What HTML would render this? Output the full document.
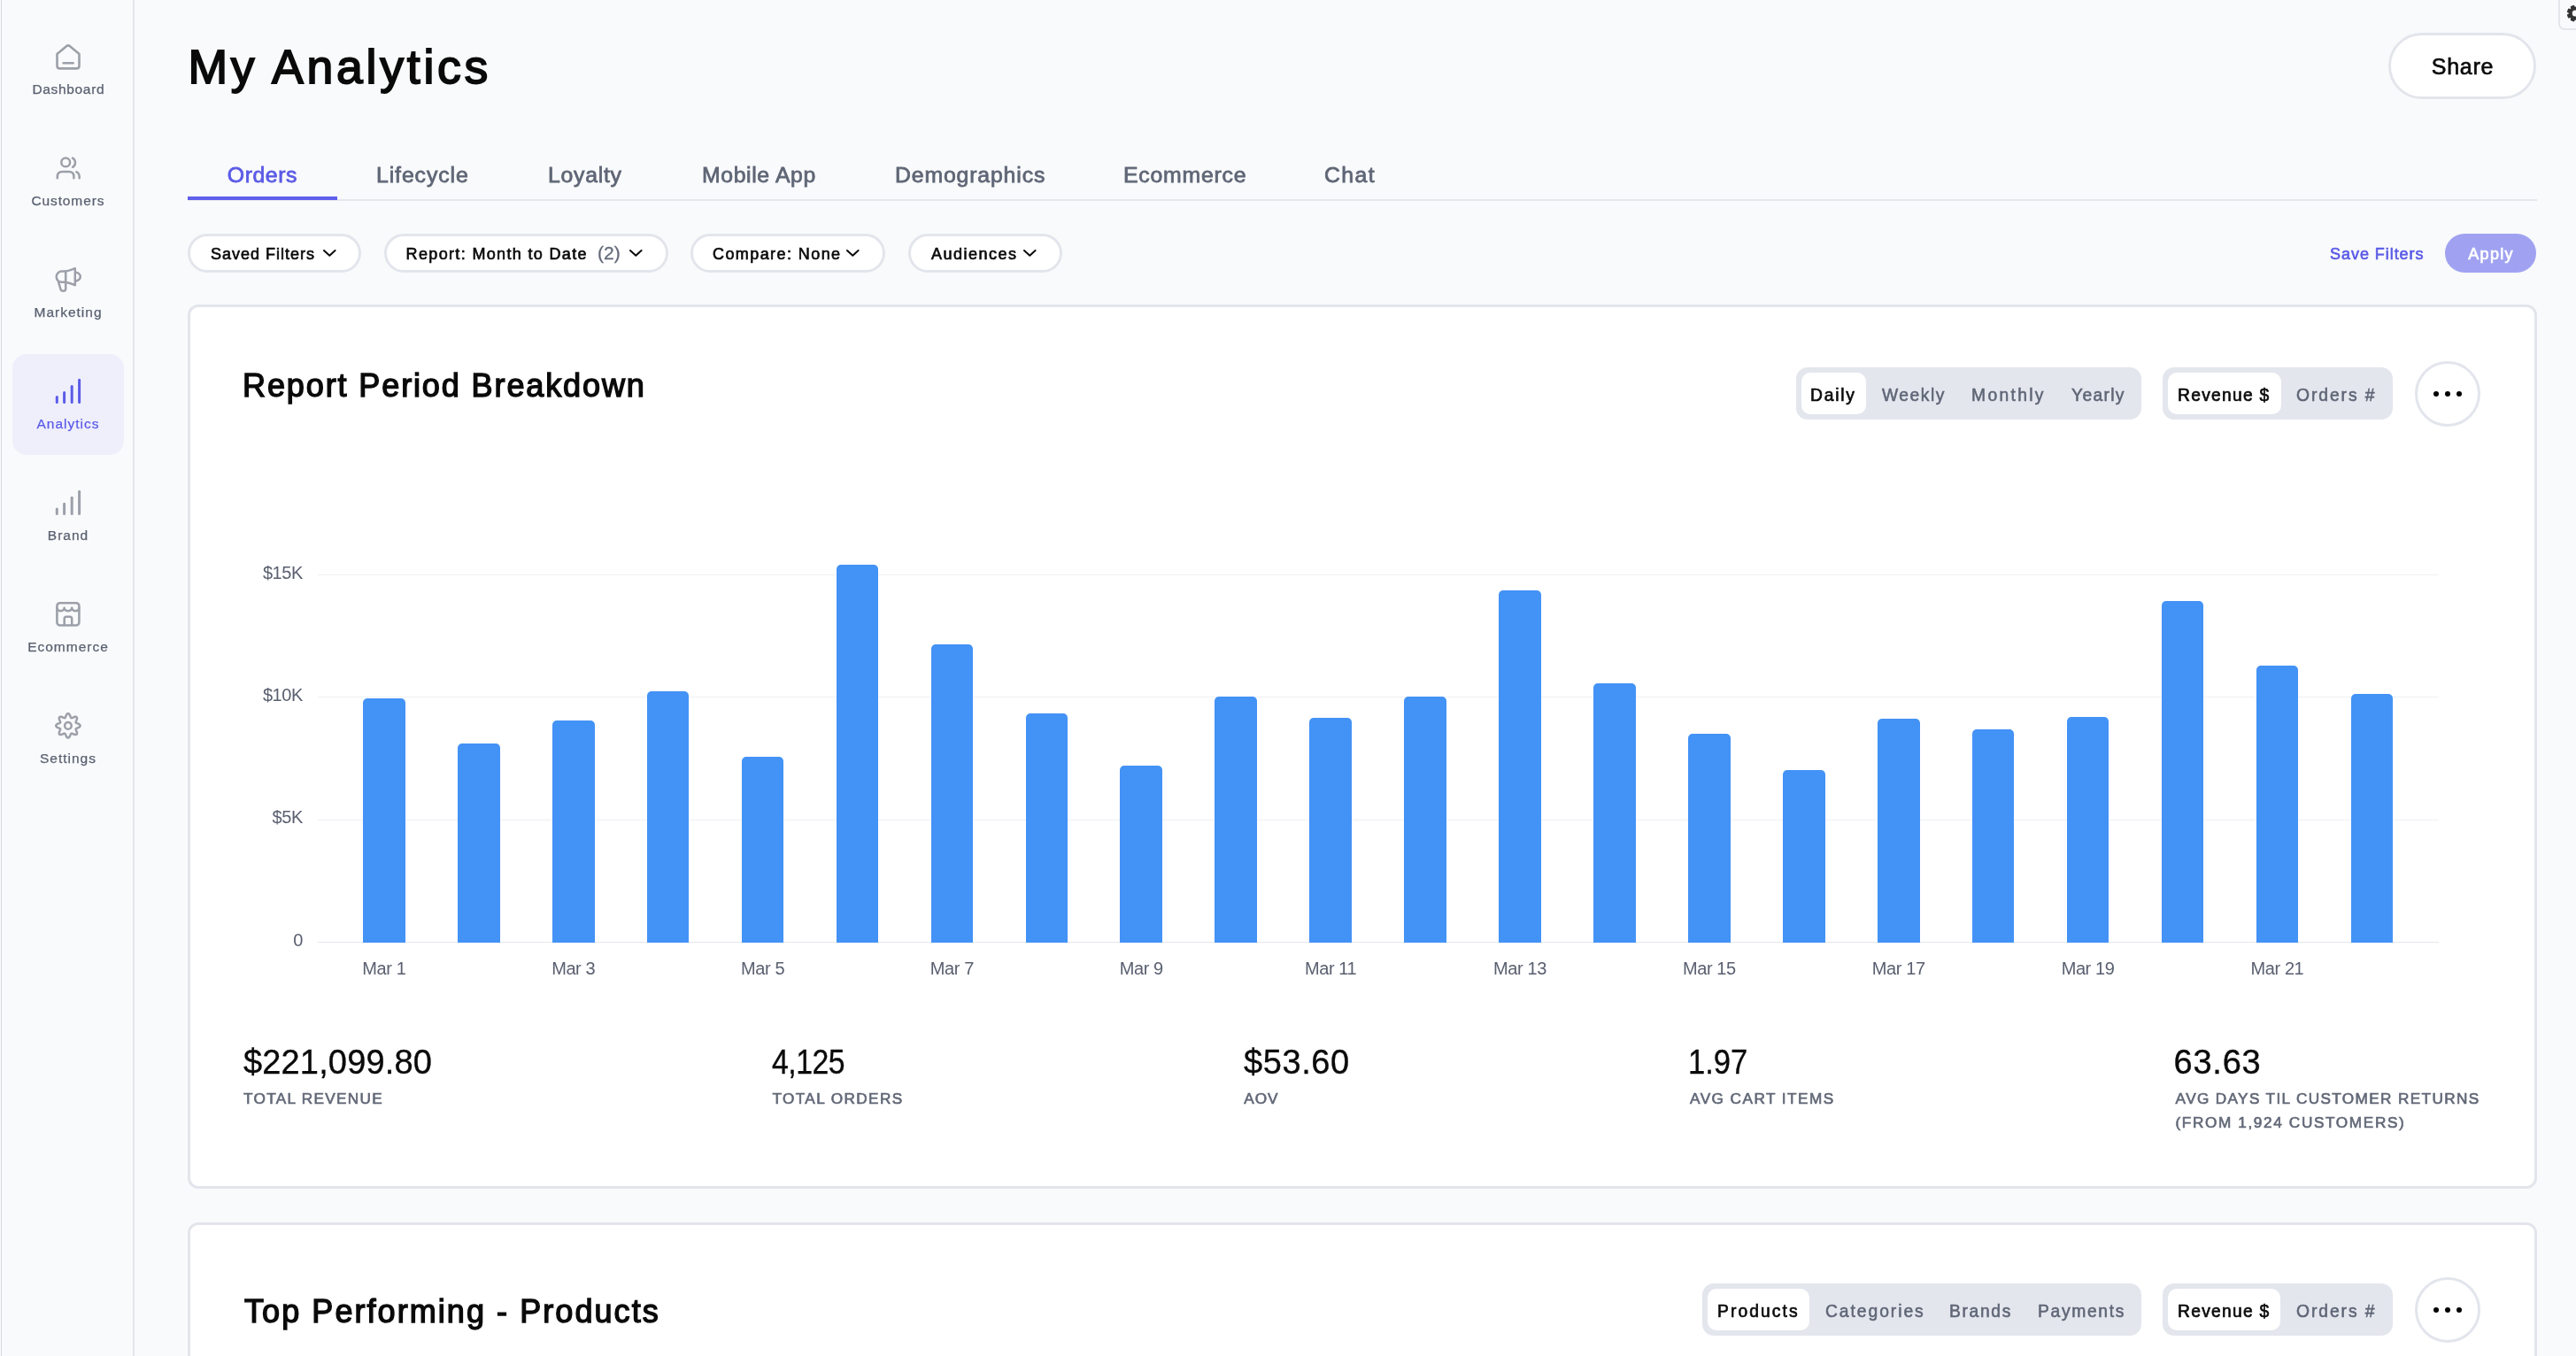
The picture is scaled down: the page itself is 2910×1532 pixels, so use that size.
<!DOCTYPE html><html><head><meta charset="utf-8"><style>
html,body{margin:0;padding:0;}
body{width:2910px;height:1532px;overflow:hidden;position:relative;background:#F9FAFB;font-family:"Liberation Sans", sans-serif;}
#root{position:absolute;left:0;top:0;width:2910px;height:1532px;will-change:transform;}
</style></head><body><div id="root">
<div style="position:absolute;left:1px;top:0px;width:1px;height:1532px;background:#D5D8DE;border-radius:0px;"></div>
<div style="position:absolute;left:150px;top:0px;width:2px;height:1532px;background:#E3E5EE;border-radius:0px;"></div>
<div style="position:absolute;left:14px;top:400px;width:126px;height:114px;background:#EFEFFC;border-radius:16px;"></div>
<div style="position:absolute;left:-422.65px;width:1000px;text-align:center;top:93.38px;height:15.5px;line-height:15.5px;font-size:15.5px;font-weight:400;color:#596070;letter-spacing:0.658px;white-space:nowrap;-webkit-text-stroke:0.25px #596070;">Dashboard</div>
<div style="position:absolute;left:-423.10px;width:1000px;text-align:center;top:219.28px;height:15.5px;line-height:15.5px;font-size:15.5px;font-weight:400;color:#596070;letter-spacing:0.875px;white-space:nowrap;-webkit-text-stroke:0.25px #596070;">Customers</div>
<div style="position:absolute;left:-423.00px;width:1000px;text-align:center;top:345.18px;height:15.5px;line-height:15.5px;font-size:15.5px;font-weight:400;color:#596070;letter-spacing:1.000px;white-space:nowrap;-webkit-text-stroke:0.25px #596070;">Marketing</div>
<div style="position:absolute;left:-423.00px;width:1000px;text-align:center;top:471.08px;height:15.5px;line-height:15.5px;font-size:15.5px;font-weight:400;color:#5B5BE8;letter-spacing:1.000px;white-space:nowrap;-webkit-text-stroke:0.25px #5B5BE8;">Analytics</div>
<div style="position:absolute;left:-423.00px;width:1000px;text-align:center;top:596.98px;height:15.5px;line-height:15.5px;font-size:15.5px;font-weight:400;color:#596070;letter-spacing:1.000px;white-space:nowrap;-webkit-text-stroke:0.25px #596070;">Brand</div>
<div style="position:absolute;left:-423.00px;width:1000px;text-align:center;top:722.88px;height:15.5px;line-height:15.5px;font-size:15.5px;font-weight:400;color:#596070;letter-spacing:1.000px;white-space:nowrap;-webkit-text-stroke:0.25px #596070;">Ecommerce</div>
<div style="position:absolute;left:-423.00px;width:1000px;text-align:center;top:848.78px;height:15.5px;line-height:15.5px;font-size:15.5px;font-weight:400;color:#596070;letter-spacing:1.000px;white-space:nowrap;-webkit-text-stroke:0.25px #596070;">Settings</div>
<svg style="position:absolute;left:0;top:0" width="152" height="900" viewBox="0 0 152 900"><path d="M64.5,61 L75.3,52.1 Q77,50.7 78.7,52.1 L89.5,61 L89.5,74.2 Q89.5,77.4 86.3,77.4 L67.7,77.4 Q64.5,77.4 64.5,74.2 Z" fill="none" stroke="#9CA0A9" stroke-width="2.6" stroke-linejoin="round"/><path d="M71.7,71.3 H82.6" stroke="#9CA0A9" stroke-width="2.6" stroke-linecap="round"/><circle cx="74.2" cy="183.4" r="4.9" fill="none" stroke="#9CA0A9" stroke-width="2.5"/><path d="M82,178.6 Q85,180 85,183.7 Q85,187.4 82,188.8" fill="none" stroke="#9CA0A9" stroke-width="2.5" stroke-linecap="round"/><path d="M64.8,201.2 V199.5 Q64.8,194 70.3,194 H78 Q83.4,194 83.4,199.5 V201.2" fill="none" stroke="#9CA0A9" stroke-width="2.5" stroke-linecap="round"/><path d="M86.3,194.2 Q89.7,195.8 89.7,200 V201.2" fill="none" stroke="#9CA0A9" stroke-width="2.5" stroke-linecap="round"/><path d="M74.2,306.6 Q80,305.4 84.8,303.2 L84.8,322.2 Q80,320 74.2,318.8 L69.8,318.8 A6.1,6.1 0 0 1 69.8,306.6 Z" fill="none" stroke="#9CA0A9" stroke-width="2.5" stroke-linejoin="round"/><path d="M74.2,306.6 V326.2 Q74.2,328.8 71.2,328.8 Q69,328.8 68.4,326.5 L66,318.3" fill="none" stroke="#9CA0A9" stroke-width="2.5" stroke-linejoin="round" stroke-linecap="round"/><path d="M85.2,307.4 Q90.8,308.8 90.8,312.6 Q90.8,316.4 85.2,317.8" fill="none" stroke="#9CA0A9" stroke-width="2.5" stroke-linecap="round"/><line x1="64.3" y1="448.6" x2="64.3" y2="454.5" stroke="#5B5BE8" stroke-width="3" stroke-linecap="round"/><line x1="72.6" y1="443.4" x2="72.6" y2="454.5" stroke="#5B5BE8" stroke-width="3" stroke-linecap="round"/><line x1="81.2" y1="436.4" x2="81.2" y2="454.5" stroke="#5B5BE8" stroke-width="3" stroke-linecap="round"/><line x1="89.6" y1="429.2" x2="89.6" y2="454.5" stroke="#5B5BE8" stroke-width="3" stroke-linecap="round"/><line x1="64.3" y1="574.9" x2="64.3" y2="580.4" stroke="#9CA0A9" stroke-width="3" stroke-linecap="round"/><line x1="72.6" y1="569.3" x2="72.6" y2="580.4" stroke="#9CA0A9" stroke-width="3" stroke-linecap="round"/><line x1="81.2" y1="562.3" x2="81.2" y2="580.4" stroke="#9CA0A9" stroke-width="3" stroke-linecap="round"/><line x1="89.6" y1="555.3" x2="89.6" y2="580.4" stroke="#9CA0A9" stroke-width="3" stroke-linecap="round"/><rect x="64.4" y="681.2" width="25" height="25.3" rx="3.5" fill="none" stroke="#9CA0A9" stroke-width="2.6"/><path d="M64.4,686.8 A4.1,3.4 0 0 0 72.6,686.8 A4.3,3.4 0 0 0 81.2,686.8 A4.1,3.4 0 0 0 89.4,686.8" fill="none" stroke="#9CA0A9" stroke-width="2.5" stroke-linejoin="round"/><path d="M72.7,706.5 V699 Q72.7,696.7 75,696.7 H78.9 Q81.2,696.7 81.2,699 V706.5" fill="none" stroke="#9CA0A9" stroke-width="2.5"/><path d="M90.60,819.90 L90.49,820.43 L90.16,820.94 L89.65,821.41 L89.00,821.82 L88.28,822.16 L87.55,822.46 L86.88,822.71 L86.32,822.96 L85.91,823.22 L85.68,823.54 L85.62,823.92 L85.72,824.39 L85.94,824.96 L86.24,825.62 L86.55,826.34 L86.81,827.10 L86.98,827.85 L87.01,828.54 L86.88,829.13 L86.59,829.59 L86.13,829.88 L85.54,830.01 L84.85,829.98 L84.10,829.81 L83.34,829.55 L82.62,829.24 L81.96,828.94 L81.39,828.72 L80.92,828.62 L80.54,828.68 L80.22,828.91 L79.96,829.32 L79.71,829.88 L79.46,830.55 L79.16,831.28 L78.82,832.00 L78.41,832.65 L77.94,833.16 L77.43,833.49 L76.90,833.60 L76.37,833.49 L75.86,833.16 L75.39,832.65 L74.98,832.00 L74.64,831.28 L74.34,830.55 L74.09,829.88 L73.84,829.32 L73.58,828.91 L73.26,828.68 L72.88,828.62 L72.41,828.72 L71.84,828.94 L71.18,829.24 L70.46,829.55 L69.70,829.81 L68.95,829.98 L68.26,830.01 L67.67,829.88 L67.21,829.59 L66.92,829.13 L66.79,828.54 L66.82,827.85 L66.99,827.10 L67.25,826.34 L67.56,825.62 L67.86,824.96 L68.08,824.39 L68.18,823.92 L68.12,823.54 L67.89,823.22 L67.48,822.96 L66.92,822.71 L66.25,822.46 L65.52,822.16 L64.80,821.82 L64.15,821.41 L63.64,820.94 L63.31,820.43 L63.20,819.90 L63.31,819.37 L63.64,818.86 L64.15,818.39 L64.80,817.98 L65.52,817.64 L66.25,817.34 L66.92,817.09 L67.48,816.84 L67.89,816.58 L68.12,816.26 L68.18,815.88 L68.08,815.41 L67.86,814.84 L67.56,814.18 L67.25,813.46 L66.99,812.70 L66.82,811.95 L66.79,811.26 L66.92,810.67 L67.21,810.21 L67.67,809.92 L68.26,809.79 L68.95,809.82 L69.70,809.99 L70.46,810.25 L71.18,810.56 L71.84,810.86 L72.41,811.08 L72.88,811.18 L73.26,811.12 L73.58,810.89 L73.84,810.48 L74.09,809.92 L74.34,809.25 L74.64,808.52 L74.98,807.80 L75.39,807.15 L75.86,806.64 L76.37,806.31 L76.90,806.20 L77.43,806.31 L77.94,806.64 L78.41,807.15 L78.82,807.80 L79.16,808.52 L79.46,809.25 L79.71,809.92 L79.96,810.48 L80.22,810.89 L80.54,811.12 L80.92,811.18 L81.39,811.08 L81.96,810.86 L82.62,810.56 L83.34,810.25 L84.10,809.99 L84.85,809.82 L85.54,809.79 L86.13,809.92 L86.59,810.21 L86.88,810.67 L87.01,811.26 L86.98,811.95 L86.81,812.70 L86.55,813.46 L86.24,814.18 L85.94,814.84 L85.72,815.41 L85.62,815.88 L85.68,816.26 L85.91,816.58 L86.32,816.84 L86.88,817.09 L87.55,817.34 L88.28,817.64 L89.00,817.98 L89.65,818.39 L90.16,818.86 L90.49,819.37 L90.60,819.90 Z" fill="none" stroke="#9CA0A9" stroke-width="2.5" stroke-linejoin="round"/><circle cx="76.9" cy="819.9" r="3.8" fill="none" stroke="#9CA0A9" stroke-width="2.5"/></svg>
<div style="position:absolute;left:212.50px;top:48.92px;height:53.6px;line-height:53.6px;font-size:53.6px;font-weight:400;color:#0A0A0A;letter-spacing:3.728px;white-space:nowrap;-webkit-text-stroke:1.8px #0A0A0A;">My Analytics</div>
<div style="position:absolute;left:2698px;top:37px;width:167px;height:75px;background:#fff;border:3px solid #E3E5EC;box-sizing:border-box;border-radius:38px;"></div>
<div style="position:absolute;left:2282.00px;width:1000px;text-align:center;top:62.83px;height:25px;line-height:25px;font-size:25px;font-weight:400;color:#0A0A0A;letter-spacing:0.750px;white-space:nowrap;-webkit-text-stroke:0.65px #0A0A0A;">Share</div>
<div style="position:absolute;left:2890px;top:-10px;width:40px;height:44px;background:#F9FAFB;border:2px solid #E4E6EB;box-sizing:border-box;border-radius:7px;"></div>
<svg style="position:absolute;left:2880px;top:0" width="30" height="34" viewBox="2880 0 30 34"><rect x="2906.7999999999997" y="5.699999999999999" width="4.8" height="6" rx="1.1" transform="rotate(22.5 2909.2 15.1)" fill="#333"/><rect x="2906.7999999999997" y="5.699999999999999" width="4.8" height="6" rx="1.1" transform="rotate(67.5 2909.2 15.1)" fill="#333"/><rect x="2906.7999999999997" y="5.699999999999999" width="4.8" height="6" rx="1.1" transform="rotate(112.5 2909.2 15.1)" fill="#333"/><rect x="2906.7999999999997" y="5.699999999999999" width="4.8" height="6" rx="1.1" transform="rotate(157.5 2909.2 15.1)" fill="#333"/><rect x="2906.7999999999997" y="5.699999999999999" width="4.8" height="6" rx="1.1" transform="rotate(202.5 2909.2 15.1)" fill="#333"/><rect x="2906.7999999999997" y="5.699999999999999" width="4.8" height="6" rx="1.1" transform="rotate(247.5 2909.2 15.1)" fill="#333"/><rect x="2906.7999999999997" y="5.699999999999999" width="4.8" height="6" rx="1.1" transform="rotate(292.5 2909.2 15.1)" fill="#333"/><rect x="2906.7999999999997" y="5.699999999999999" width="4.8" height="6" rx="1.1" transform="rotate(337.5 2909.2 15.1)" fill="#333"/><circle cx="2909.2" cy="15.1" r="7.4" fill="#333"/><circle cx="2909.2" cy="15.1" r="3.5" fill="#F9FAFB"/></svg>
<div style="position:absolute;left:256.80px;top:186.00px;height:24.8px;line-height:24.8px;font-size:24.8px;font-weight:400;color:#5B5BE6;letter-spacing:0.580px;white-space:nowrap;-webkit-text-stroke:0.8px #5B5BE6;">Orders</div>
<div style="position:absolute;left:425.00px;top:186.00px;height:24.8px;line-height:24.8px;font-size:24.8px;font-weight:400;color:#5F6676;letter-spacing:0.900px;white-space:nowrap;-webkit-text-stroke:0.8px #5F6676;">Lifecycle</div>
<div style="position:absolute;left:619.00px;top:186.00px;height:24.8px;line-height:24.8px;font-size:24.8px;font-weight:400;color:#5F6676;letter-spacing:0.733px;white-space:nowrap;-webkit-text-stroke:0.8px #5F6676;">Loyalty</div>
<div style="position:absolute;left:793.00px;top:186.00px;height:24.8px;line-height:24.8px;font-size:24.8px;font-weight:400;color:#5F6676;letter-spacing:0.622px;white-space:nowrap;-webkit-text-stroke:0.8px #5F6676;">Mobile App</div>
<div style="position:absolute;left:1011.00px;top:186.00px;height:24.8px;line-height:24.8px;font-size:24.8px;font-weight:400;color:#5F6676;letter-spacing:0.855px;white-space:nowrap;-webkit-text-stroke:0.8px #5F6676;">Demographics</div>
<div style="position:absolute;left:1269.00px;top:186.00px;height:24.8px;line-height:24.8px;font-size:24.8px;font-weight:400;color:#5F6676;letter-spacing:0.775px;white-space:nowrap;-webkit-text-stroke:0.8px #5F6676;">Ecommerce</div>
<div style="position:absolute;left:1496.00px;top:186.00px;height:24.8px;line-height:24.8px;font-size:24.8px;font-weight:400;color:#5F6676;letter-spacing:1.400px;white-space:nowrap;-webkit-text-stroke:0.8px #5F6676;">Chat</div>
<div style="position:absolute;left:212px;top:225px;width:2654px;height:2px;background:#E5E7EC;border-radius:0px;"></div>
<div style="position:absolute;left:212px;top:221.5px;width:169px;height:4.5px;background:#5E5FEA;border-radius:0px;"></div>
<div style="position:absolute;left:212px;top:264px;width:196px;height:44px;background:#fff;border:3px solid #E3E5EC;box-sizing:border-box;border-radius:22px;"></div>
<div style="position:absolute;left:434px;top:264px;width:321px;height:44px;background:#fff;border:3px solid #E3E5EC;box-sizing:border-box;border-radius:22px;"></div>
<div style="position:absolute;left:780px;top:264px;width:220px;height:44px;background:#fff;border:3px solid #E3E5EC;box-sizing:border-box;border-radius:22px;"></div>
<div style="position:absolute;left:1026px;top:264px;width:174px;height:44px;background:#fff;border:3px solid #E3E5EC;box-sizing:border-box;border-radius:22px;"></div>
<div style="position:absolute;left:238.00px;top:277.76px;height:18px;line-height:18px;font-size:18px;font-weight:400;color:#0A0A0A;letter-spacing:1.000px;white-space:nowrap;-webkit-text-stroke:0.65px #0A0A0A;">Saved Filters</div>
<div style="position:absolute;left:458.60px;top:277.76px;height:18px;line-height:18px;font-size:18px;font-weight:400;color:#0A0A0A;letter-spacing:1.345px;white-space:nowrap;-webkit-text-stroke:0.65px #0A0A0A;">Report: Month to Date</div>
<div style="position:absolute;left:675.00px;top:274.92px;height:21px;line-height:21px;font-size:21px;font-weight:400;color:#656B7A;letter-spacing:0.000px;white-space:nowrap;-webkit-text-stroke:0.3px #656B7A;">(2)</div>
<div style="position:absolute;left:805.00px;top:277.76px;height:18px;line-height:18px;font-size:18px;font-weight:400;color:#0A0A0A;letter-spacing:1.417px;white-space:nowrap;-webkit-text-stroke:0.65px #0A0A0A;">Compare: None</div>
<div style="position:absolute;left:1052.00px;top:277.76px;height:18px;line-height:18px;font-size:18px;font-weight:400;color:#0A0A0A;letter-spacing:1.500px;white-space:nowrap;-webkit-text-stroke:0.65px #0A0A0A;">Audiences</div>
<svg style="position:absolute;left:363.3px;top:280.3px" width="18.6" height="11.8"><path d="M3,3 L9.3,8.8 L15.6,3" fill="none" stroke="#0A0A0A" stroke-width="2.0" stroke-linecap="round" stroke-linejoin="round"/></svg>
<svg style="position:absolute;left:709px;top:280.3px" width="18.6" height="11.8"><path d="M3,3 L9.3,8.8 L15.6,3" fill="none" stroke="#0A0A0A" stroke-width="2.0" stroke-linecap="round" stroke-linejoin="round"/></svg>
<svg style="position:absolute;left:953.8px;top:280.3px" width="18.6" height="11.8"><path d="M3,3 L9.3,8.8 L15.6,3" fill="none" stroke="#0A0A0A" stroke-width="2.0" stroke-linecap="round" stroke-linejoin="round"/></svg>
<svg style="position:absolute;left:1154px;top:280.3px" width="18.6" height="11.8"><path d="M3,3 L9.3,8.8 L15.6,3" fill="none" stroke="#0A0A0A" stroke-width="2.0" stroke-linecap="round" stroke-linejoin="round"/></svg>
<div style="position:absolute;left:2632.00px;top:277.76px;height:18px;line-height:18px;font-size:18px;font-weight:400;color:#5B5BE6;letter-spacing:0.954px;white-space:nowrap;-webkit-text-stroke:0.65px #5B5BE6;">Save Filters</div>
<div style="position:absolute;left:2762px;top:264px;width:103px;height:44px;background:#A0A2F1;border-radius:22px;"></div>
<div style="position:absolute;left:2314.00px;width:1000px;text-align:center;top:277.76px;height:18px;line-height:18px;font-size:18px;font-weight:400;color:#FFFFFF;letter-spacing:1.250px;white-space:nowrap;-webkit-text-stroke:0.65px #FFFFFF;">Apply</div>
<div style="position:absolute;left:212px;top:344px;width:2653.5px;height:999px;background:#fff;border:3px solid #E3E5EC;box-sizing:border-box;border-radius:12px;"></div>
<div style="position:absolute;left:274.00px;top:418.13px;height:36.1px;line-height:36.1px;font-size:36.1px;font-weight:400;color:#0A0A0A;letter-spacing:1.855px;white-space:nowrap;-webkit-text-stroke:1.4px #0A0A0A;">Report Period Breakdown</div>
<div style="position:absolute;left:2029px;top:415px;width:390px;height:59px;background:#E4E6EE;border-radius:13px;"></div>
<div style="position:absolute;left:2034.5px;top:421px;width:73.5px;height:47px;background:#fff;border-radius:10px;"></div>
<div style="position:absolute;left:2045.00px;top:436.96px;height:19.3px;line-height:19.3px;font-size:19.3px;font-weight:400;color:#0A0A0A;letter-spacing:1.750px;white-space:nowrap;-webkit-text-stroke:0.65px #0A0A0A;">Daily</div>
<div style="position:absolute;left:2126.00px;top:436.96px;height:19.3px;line-height:19.3px;font-size:19.3px;font-weight:400;color:#5F6676;letter-spacing:1.500px;white-space:nowrap;-webkit-text-stroke:0.55px #5F6676;">Weekly</div>
<div style="position:absolute;left:2227.00px;top:436.96px;height:19.3px;line-height:19.3px;font-size:19.3px;font-weight:400;color:#5F6676;letter-spacing:2.333px;white-space:nowrap;-webkit-text-stroke:0.55px #5F6676;">Monthly</div>
<div style="position:absolute;left:2340.00px;top:436.96px;height:19.3px;line-height:19.3px;font-size:19.3px;font-weight:400;color:#5F6676;letter-spacing:1.300px;white-space:nowrap;-webkit-text-stroke:0.55px #5F6676;">Yearly</div>
<div style="position:absolute;left:2443px;top:415px;width:260px;height:59px;background:#E4E6EE;border-radius:13px;"></div>
<div style="position:absolute;left:2449px;top:421px;width:128px;height:47px;background:#fff;border-radius:10px;"></div>
<div style="position:absolute;left:2460.00px;top:436.96px;height:19.3px;line-height:19.3px;font-size:19.3px;font-weight:400;color:#0A0A0A;letter-spacing:1.250px;white-space:nowrap;-webkit-text-stroke:0.65px #0A0A0A;">Revenue $</div>
<div style="position:absolute;left:2594.00px;top:436.96px;height:19.3px;line-height:19.3px;font-size:19.3px;font-weight:400;color:#5F6676;letter-spacing:1.927px;white-space:nowrap;-webkit-text-stroke:0.55px #5F6676;">Orders #</div>
<div style="position:absolute;left:2728px;top:408px;width:74px;height:74px;border:3px solid #E3E5EC;box-sizing:border-box;border-radius:50%;background:#fff"></div>
<div style="position:absolute;left:2748.7px;top:441.7px;width:6.6px;height:6.6px;border-radius:50%;background:#000"></div>
<div style="position:absolute;left:2761.7px;top:441.7px;width:6.6px;height:6.6px;border-radius:50%;background:#000"></div>
<div style="position:absolute;left:2774.7px;top:441.7px;width:6.6px;height:6.6px;border-radius:50%;background:#000"></div>
<div style="position:absolute;left:359px;top:649px;width:2396px;height:1px;background:#EEF0F4;border-radius:0px;"></div>
<div style="position:absolute;left:359px;top:787px;width:2396px;height:1px;background:#EEF0F4;border-radius:0px;"></div>
<div style="position:absolute;left:359px;top:926px;width:2396px;height:1px;background:#EEF0F4;border-radius:0px;"></div>
<div style="position:absolute;left:359px;top:1064px;width:2396px;height:1px;background:#E3E6EB;border-radius:0px;"></div>
<div style="position:absolute;left:-658.00px;width:1000px;text-align:right;top:636.97px;height:20px;line-height:20px;font-size:20px;font-weight:400;color:#5A6070;letter-spacing:-0.400px;white-space:nowrap;">$15K</div>
<div style="position:absolute;left:-658.00px;width:1000px;text-align:right;top:775.17px;height:20px;line-height:20px;font-size:20px;font-weight:400;color:#5A6070;letter-spacing:-0.400px;white-space:nowrap;">$10K</div>
<div style="position:absolute;left:-658.00px;width:1000px;text-align:right;top:913.47px;height:20px;line-height:20px;font-size:20px;font-weight:400;color:#5A6070;letter-spacing:-0.400px;white-space:nowrap;">$5K</div>
<div style="position:absolute;left:-658.00px;width:1000px;text-align:right;top:1051.87px;height:20px;line-height:20px;font-size:20px;font-weight:400;color:#5A6070;letter-spacing:-0.400px;white-space:nowrap;">0</div>
<div style="position:absolute;left:410.00px;top:788.6px;width:47.7px;height:276.00px;background:#4392F6;border-radius:5px 5px 0 0"></div>
<div style="position:absolute;left:-66.15px;width:1000px;text-align:center;top:1083.87px;height:20px;line-height:20px;font-size:20px;font-weight:400;color:#5A6070;letter-spacing:-0.400px;white-space:nowrap;">Mar 1</div>
<div style="position:absolute;left:516.93px;top:839.6px;width:47.7px;height:225.00px;background:#4392F6;border-radius:5px 5px 0 0"></div>
<div style="position:absolute;left:623.86px;top:813.6px;width:47.7px;height:251.00px;background:#4392F6;border-radius:5px 5px 0 0"></div>
<div style="position:absolute;left:147.71px;width:1000px;text-align:center;top:1083.87px;height:20px;line-height:20px;font-size:20px;font-weight:400;color:#5A6070;letter-spacing:-0.400px;white-space:nowrap;">Mar 3</div>
<div style="position:absolute;left:730.79px;top:781px;width:47.7px;height:283.60px;background:#4392F6;border-radius:5px 5px 0 0"></div>
<div style="position:absolute;left:837.72px;top:854.9px;width:47.7px;height:209.70px;background:#4392F6;border-radius:5px 5px 0 0"></div>
<div style="position:absolute;left:361.57px;width:1000px;text-align:center;top:1083.87px;height:20px;line-height:20px;font-size:20px;font-weight:400;color:#5A6070;letter-spacing:-0.400px;white-space:nowrap;">Mar 5</div>
<div style="position:absolute;left:944.65px;top:637.7px;width:47.7px;height:426.90px;background:#4392F6;border-radius:5px 5px 0 0"></div>
<div style="position:absolute;left:1051.58px;top:728.4px;width:47.7px;height:336.20px;background:#4392F6;border-radius:5px 5px 0 0"></div>
<div style="position:absolute;left:575.43px;width:1000px;text-align:center;top:1083.87px;height:20px;line-height:20px;font-size:20px;font-weight:400;color:#5A6070;letter-spacing:-0.400px;white-space:nowrap;">Mar 7</div>
<div style="position:absolute;left:1158.51px;top:805.8px;width:47.7px;height:258.80px;background:#4392F6;border-radius:5px 5px 0 0"></div>
<div style="position:absolute;left:1265.44px;top:864.8px;width:47.7px;height:199.80px;background:#4392F6;border-radius:5px 5px 0 0"></div>
<div style="position:absolute;left:789.29px;width:1000px;text-align:center;top:1083.87px;height:20px;line-height:20px;font-size:20px;font-weight:400;color:#5A6070;letter-spacing:-0.400px;white-space:nowrap;">Mar 9</div>
<div style="position:absolute;left:1372.37px;top:787px;width:47.7px;height:277.60px;background:#4392F6;border-radius:5px 5px 0 0"></div>
<div style="position:absolute;left:1479.30px;top:810.6px;width:47.7px;height:254.00px;background:#4392F6;border-radius:5px 5px 0 0"></div>
<div style="position:absolute;left:1003.15px;width:1000px;text-align:center;top:1083.87px;height:20px;line-height:20px;font-size:20px;font-weight:400;color:#5A6070;letter-spacing:-0.400px;white-space:nowrap;">Mar 11</div>
<div style="position:absolute;left:1586.23px;top:786.7px;width:47.7px;height:277.90px;background:#4392F6;border-radius:5px 5px 0 0"></div>
<div style="position:absolute;left:1693.16px;top:666.8px;width:47.7px;height:397.80px;background:#4392F6;border-radius:5px 5px 0 0"></div>
<div style="position:absolute;left:1217.01px;width:1000px;text-align:center;top:1083.87px;height:20px;line-height:20px;font-size:20px;font-weight:400;color:#5A6070;letter-spacing:-0.400px;white-space:nowrap;">Mar 13</div>
<div style="position:absolute;left:1800.09px;top:771.7px;width:47.7px;height:292.90px;background:#4392F6;border-radius:5px 5px 0 0"></div>
<div style="position:absolute;left:1907.02px;top:829.4px;width:47.7px;height:235.20px;background:#4392F6;border-radius:5px 5px 0 0"></div>
<div style="position:absolute;left:1430.87px;width:1000px;text-align:center;top:1083.87px;height:20px;line-height:20px;font-size:20px;font-weight:400;color:#5A6070;letter-spacing:-0.400px;white-space:nowrap;">Mar 15</div>
<div style="position:absolute;left:2013.95px;top:870px;width:47.7px;height:194.60px;background:#4392F6;border-radius:5px 5px 0 0"></div>
<div style="position:absolute;left:2120.88px;top:812px;width:47.7px;height:252.60px;background:#4392F6;border-radius:5px 5px 0 0"></div>
<div style="position:absolute;left:1644.73px;width:1000px;text-align:center;top:1083.87px;height:20px;line-height:20px;font-size:20px;font-weight:400;color:#5A6070;letter-spacing:-0.400px;white-space:nowrap;">Mar 17</div>
<div style="position:absolute;left:2227.81px;top:823.5px;width:47.7px;height:241.10px;background:#4392F6;border-radius:5px 5px 0 0"></div>
<div style="position:absolute;left:2334.74px;top:810.3px;width:47.7px;height:254.30px;background:#4392F6;border-radius:5px 5px 0 0"></div>
<div style="position:absolute;left:1858.59px;width:1000px;text-align:center;top:1083.87px;height:20px;line-height:20px;font-size:20px;font-weight:400;color:#5A6070;letter-spacing:-0.400px;white-space:nowrap;">Mar 19</div>
<div style="position:absolute;left:2441.67px;top:679px;width:47.7px;height:385.60px;background:#4392F6;border-radius:5px 5px 0 0"></div>
<div style="position:absolute;left:2548.60px;top:752px;width:47.7px;height:312.60px;background:#4392F6;border-radius:5px 5px 0 0"></div>
<div style="position:absolute;left:2072.45px;width:1000px;text-align:center;top:1083.87px;height:20px;line-height:20px;font-size:20px;font-weight:400;color:#5A6070;letter-spacing:-0.400px;white-space:nowrap;">Mar 21</div>
<div style="position:absolute;left:2655.53px;top:783.7px;width:47.7px;height:280.90px;background:#4392F6;border-radius:5px 5px 0 0"></div>
<div style="position:absolute;left:275.00px;top:1180.83px;height:38px;line-height:38px;font-size:38px;font-weight:400;color:#0A0A0A;letter-spacing:0.150px;white-space:nowrap;-webkit-text-stroke:0.35px #0A0A0A;">$221,099.80</div>
<div style="position:absolute;left:275.00px;top:1233.24px;height:17.2px;line-height:17.2px;font-size:17.2px;font-weight:400;color:#626877;letter-spacing:1.300px;white-space:nowrap;-webkit-text-stroke:0.65px #626877;">TOTAL REVENUE</div>
<div style="position:absolute;left:872.40px;top:1180.83px;height:38px;line-height:38px;font-size:38px;font-weight:400;color:#0A0A0A;letter-spacing:-0.550px;white-space:nowrap;-webkit-text-stroke:0.35px #0A0A0A;transform:scaleX(0.89);transform-origin:0 0;">4,125</div>
<div style="position:absolute;left:872.40px;top:1233.24px;height:17.2px;line-height:17.2px;font-size:17.2px;font-weight:400;color:#626877;letter-spacing:1.391px;white-space:nowrap;-webkit-text-stroke:0.65px #626877;">TOTAL ORDERS</div>
<div style="position:absolute;left:1405.00px;top:1180.83px;height:38px;line-height:38px;font-size:38px;font-weight:400;color:#0A0A0A;letter-spacing:0.600px;white-space:nowrap;-webkit-text-stroke:0.35px #0A0A0A;">$53.60</div>
<div style="position:absolute;left:1405.30px;top:1233.24px;height:17.2px;line-height:17.2px;font-size:17.2px;font-weight:400;color:#626877;letter-spacing:0.900px;white-space:nowrap;-webkit-text-stroke:0.65px #626877;">AOV</div>
<div style="position:absolute;left:1907.00px;top:1180.83px;height:38px;line-height:38px;font-size:38px;font-weight:400;color:#0A0A0A;letter-spacing:0.000px;white-space:nowrap;-webkit-text-stroke:0.35px #0A0A0A;transform:scaleX(0.91);transform-origin:0 0;">1.97</div>
<div style="position:absolute;left:1909.00px;top:1233.24px;height:17.2px;line-height:17.2px;font-size:17.2px;font-weight:400;color:#626877;letter-spacing:1.454px;white-space:nowrap;-webkit-text-stroke:0.65px #626877;">AVG CART ITEMS</div>
<div style="position:absolute;left:2455.60px;top:1180.83px;height:38px;line-height:38px;font-size:38px;font-weight:400;color:#0A0A0A;letter-spacing:0.750px;white-space:nowrap;-webkit-text-stroke:0.35px #0A0A0A;">63.63</div>
<div style="position:absolute;left:2457.60px;top:1233.24px;height:17.2px;line-height:17.2px;font-size:17.2px;font-weight:400;color:#626877;letter-spacing:1.355px;white-space:nowrap;-webkit-text-stroke:0.65px #626877;">AVG DAYS TIL CUSTOMER RETURNS</div>
<div style="position:absolute;left:2457.40px;top:1259.74px;height:17.2px;line-height:17.2px;font-size:17.2px;font-weight:400;color:#626877;letter-spacing:1.631px;white-space:nowrap;-webkit-text-stroke:0.65px #626877;">(FROM 1,924 CUSTOMERS)</div>
<div style="position:absolute;left:212px;top:1380.5px;width:2653.5px;height:219.5px;background:#fff;border:3px solid #E3E5EC;box-sizing:border-box;border-radius:12px;"></div>
<div style="position:absolute;left:276.00px;top:1464.02px;height:36.0px;line-height:36.0px;font-size:36.0px;font-weight:400;color:#0A0A0A;letter-spacing:2.065px;white-space:nowrap;-webkit-text-stroke:1.4px #0A0A0A;">Top Performing - Products</div>
<div style="position:absolute;left:1923px;top:1450px;width:496px;height:59px;background:#E4E6EE;border-radius:13px;"></div>
<div style="position:absolute;left:1929px;top:1456px;width:115px;height:47px;background:#fff;border-radius:10px;"></div>
<div style="position:absolute;left:1940.00px;top:1471.96px;height:19.3px;line-height:19.3px;font-size:19.3px;font-weight:400;color:#0A0A0A;letter-spacing:2.070px;white-space:nowrap;-webkit-text-stroke:0.65px #0A0A0A;">Products</div>
<div style="position:absolute;left:2062.00px;top:1471.96px;height:19.3px;line-height:19.3px;font-size:19.3px;font-weight:400;color:#5F6676;letter-spacing:1.946px;white-space:nowrap;-webkit-text-stroke:0.55px #5F6676;">Categories</div>
<div style="position:absolute;left:2202.00px;top:1471.96px;height:19.3px;line-height:19.3px;font-size:19.3px;font-weight:400;color:#5F6676;letter-spacing:1.660px;white-space:nowrap;-webkit-text-stroke:0.55px #5F6676;">Brands</div>
<div style="position:absolute;left:2302.00px;top:1471.96px;height:19.3px;line-height:19.3px;font-size:19.3px;font-weight:400;color:#5F6676;letter-spacing:1.664px;white-space:nowrap;-webkit-text-stroke:0.55px #5F6676;">Payments</div>
<div style="position:absolute;left:2443px;top:1450px;width:260px;height:59px;background:#E4E6EE;border-radius:13px;"></div>
<div style="position:absolute;left:2449px;top:1456px;width:127px;height:47px;background:#fff;border-radius:10px;"></div>
<div style="position:absolute;left:2460.00px;top:1471.96px;height:19.3px;line-height:19.3px;font-size:19.3px;font-weight:400;color:#0A0A0A;letter-spacing:1.250px;white-space:nowrap;-webkit-text-stroke:0.65px #0A0A0A;">Revenue $</div>
<div style="position:absolute;left:2594.00px;top:1471.96px;height:19.3px;line-height:19.3px;font-size:19.3px;font-weight:400;color:#5F6676;letter-spacing:1.927px;white-space:nowrap;-webkit-text-stroke:0.55px #5F6676;">Orders #</div>
<div style="position:absolute;left:2728px;top:1443px;width:74px;height:74px;border:3px solid #E3E5EC;box-sizing:border-box;border-radius:50%;background:#fff"></div>
<div style="position:absolute;left:2748.7px;top:1476.7px;width:6.6px;height:6.6px;border-radius:50%;background:#000"></div>
<div style="position:absolute;left:2761.7px;top:1476.7px;width:6.6px;height:6.6px;border-radius:50%;background:#000"></div>
<div style="position:absolute;left:2774.7px;top:1476.7px;width:6.6px;height:6.6px;border-radius:50%;background:#000"></div>
</div></body></html>
